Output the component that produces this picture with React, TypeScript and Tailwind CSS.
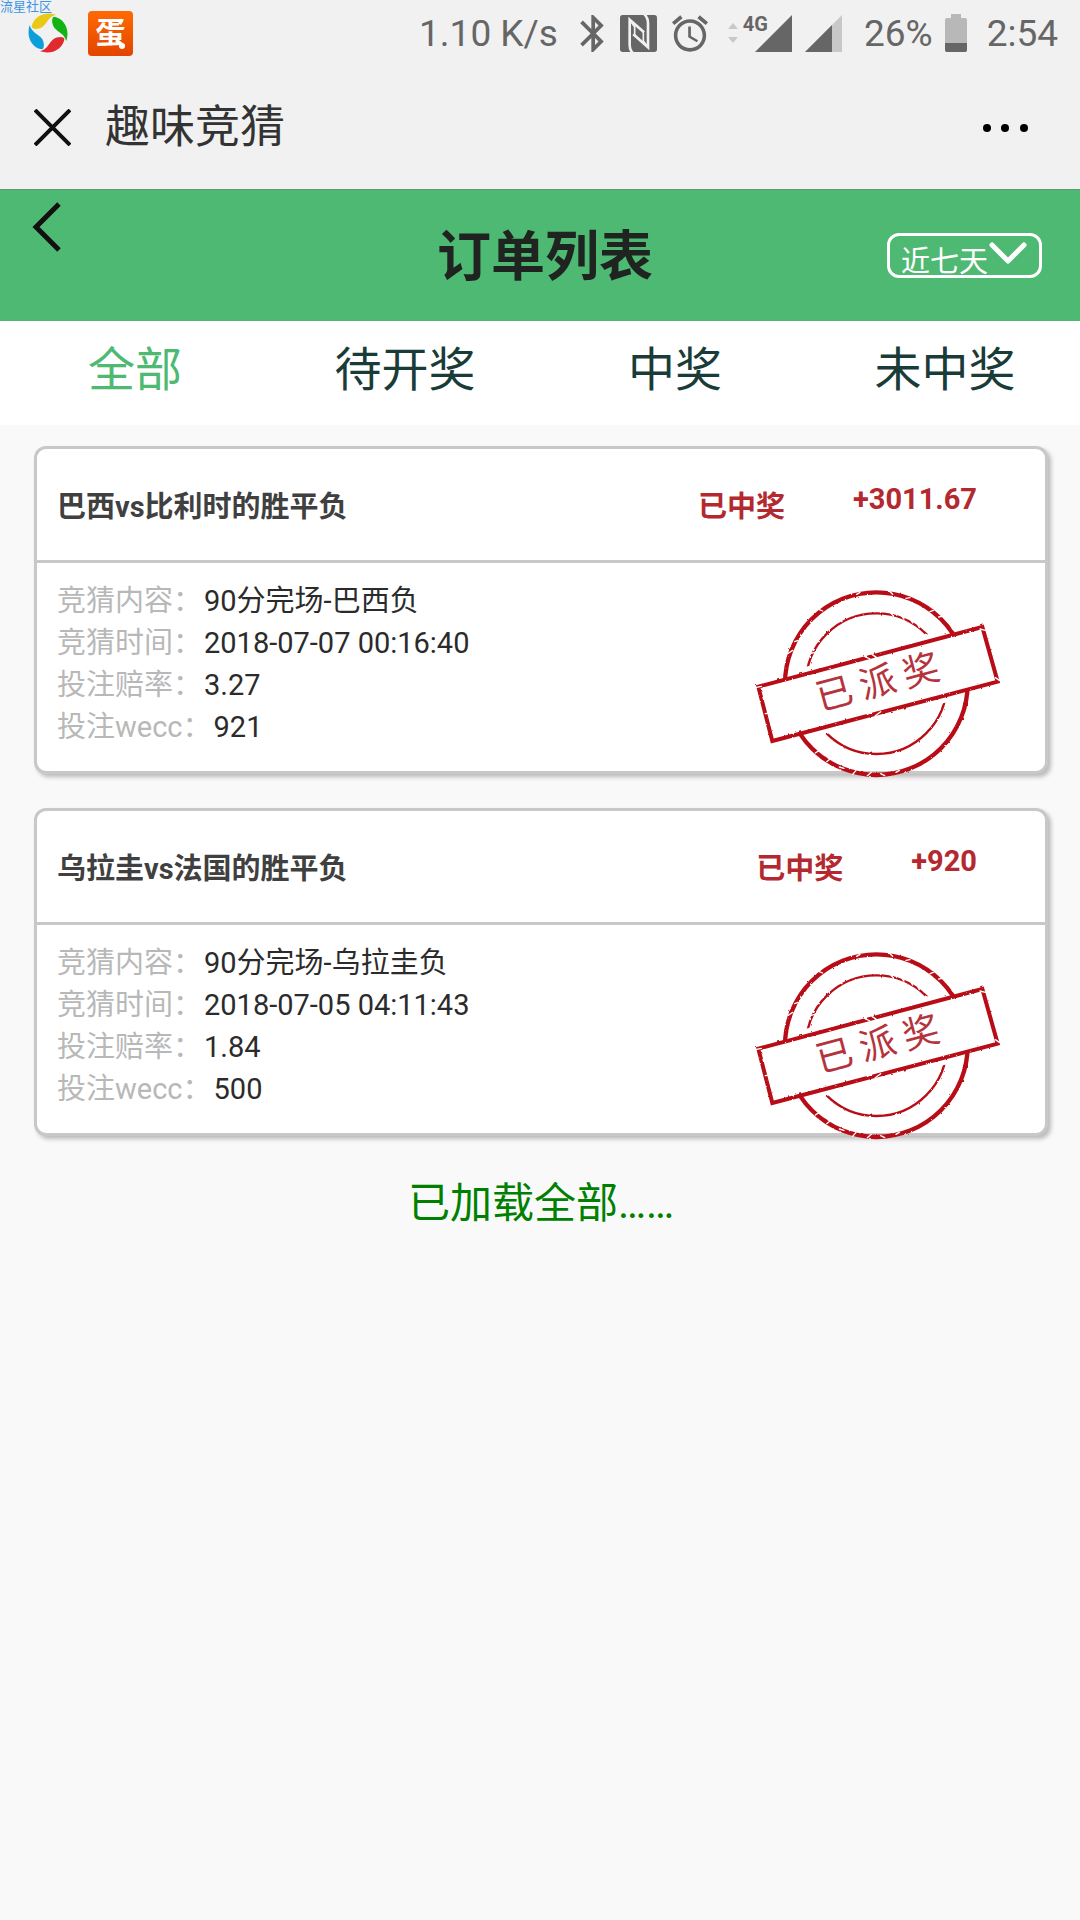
import React, { useState } from 'react';

interface Order {
  id: number;
  title: string;
  status: string;
  amount: string;
  details: { label: string; value: string }[];
}

const TABS = ['全部', '待开奖', '中奖', '未中奖'];

const ORDERS: Order[] = [
  {
    id: 1,
    title: '巴西vs比利时的胜平负',
    status: '已中奖',
    amount: '+3011.67',
    details: [
      { label: '竞猜内容：', value: '90分完场-巴西负' },
      { label: '竞猜时间：', value: '2018-07-07 00:16:40' },
      { label: '投注赔率：', value: '3.27' },
      { label: '投注wecc：', value: '921' },
    ],
  },
  {
    id: 2,
    title: '乌拉圭vs法国的胜平负',
    status: '已中奖',
    amount: '+920',
    details: [
      { label: '竞猜内容：', value: '90分完场-乌拉圭负' },
      { label: '竞猜时间：', value: '2018-07-05 04:11:43' },
      { label: '投注赔率：', value: '1.84' },
      { label: '投注wecc：', value: '500' },
    ],
  },
];

const PETAL = 'M84 5C50 -6 18 10 11 40C10 50 32 50 44 41C58 30 60 12 84 5Z';

const StatusBar: React.FC = () => (
  <div className="relative flex items-center justify-between h-[66px] pl-7 pr-[22px] text-[#666666]">
    <span className="absolute left-0 top-0 text-[13px] leading-[14px] text-[#3d94e8]">流星社区</span>

    <div className="flex items-center gap-5">
      <svg className="w-10 h-10" viewBox="0 0 120 120">
        <path d={PETAL} fill="#e9c914" />
        <path d={PETAL} fill="#12b312" transform="rotate(90 60 60)" />
        <path d={PETAL} fill="#e02a2e" transform="rotate(180 60 60)" />
        <path d={PETAL} fill="#0c9fdc" transform="rotate(270 60 60)" />
      </svg>
      <div className="relative w-[45px] h-[45px] rounded bg-linear-to-b from-[#ff6a04] to-[#e24500] flex items-center justify-center">
        <span className="text-[30px] leading-none font-bold text-white">蛋</span>
        <span className="absolute right-2 bottom-[7px] w-[6px] h-[6px] rounded-full bg-white" />
      </div>
    </div>

    <div className="flex items-center text-[37px] leading-none">
      <span>1.10 K/s</span>
      <svg className="ml-[22px] w-[24px] h-[37px]" viewBox="5 2 12.71 20" fill="currentColor">
        <path d="M17.71 7.71L12 2h-1v7.59L6.41 5 5 6.41 10.59 12 5 17.59 6.41 19 11 14.41V22h1l5.71-5.71-4.3-4.29 4.3-4.29zM13 5.83l1.88 1.88L13 9.59V5.83zm1.88 10.46L13 18.17v-3.76l1.88 1.88z" />
      </svg>
      <svg className="ml-4 w-[37px] h-[37px]" viewBox="0 0 111 111">
        <rect width="111" height="111" rx="8" fill="currentColor" />
        <g fill="none" stroke="#f1f1f1" strokeWidth="8">
          <path d="M38 113C28 104 29 96 29 86V14L72 52" />
          <path d="M73 -2C83 7 84 15 84 25V97L40 58" />
          <path d="M29 14L44 36V64" strokeWidth="5" />
          <path d="M84 97L70 78V48" strokeWidth="5" />
        </g>
      </svg>
      <svg className="ml-[15px] w-9 h-[37px]" viewBox="2 1.86 20 20.14" fill="currentColor">
        <path d="M22 5.72l-4.6-3.86-1.29 1.53 4.6 3.86L22 5.72zM7.88 3.39L6.6 1.86 2 5.71l1.29 1.53 4.59-3.85zM12.5 8H11v6l4.75 2.85.75-1.23-4-2.37V8zM12 4c-4.97 0-9 4.03-9 9s4.02 9 9 9c4.97 0 9-4.03 9-9s-4.03-9-9-9zm0 16c-3.87 0-7-3.13-7-7s3.13-7 7-7 7 3.13 7 7-3.13 7-7 7z" />
      </svg>
      <svg className="ml-5 w-[10px] h-5" viewBox="0 0 10 20" fill="#c8c8c8">
        <path d="M5 0L10 6H0ZM5 20L10 14H0Z" />
      </svg>
      <div className="relative ml-4 w-[38px] h-[37px]">
        <svg className="w-full h-full" viewBox="0 0 38 37" fill="currentColor">
          <path d="M38 0V37H1Z" />
        </svg>
        <span className="absolute right-6 top-0 text-[20px] leading-[18px] font-bold">4G</span>
      </div>
      <svg className="ml-3 w-[38px] h-[37px]" viewBox="0 0 38 37">
        <path d="M38 0V37H1Z" fill="#c8c8c8" />
        <path d="M28 10V37H1Z" fill="currentColor" />
      </svg>
      <span className="ml-[22px]">26%</span>
      <svg className="ml-3 w-[22px] h-[38px]" viewBox="0 0 22 38">
        <path d="M6 0H16V4H20Q22 4 22 6V36Q22 38 20 38H2Q0 38 0 36V6Q0 4 2 4H6Z" fill="#b8b8b8" />
        <path d="M0 29H22V36Q22 38 20 38H2Q0 38 0 36Z" fill="currentColor" />
      </svg>
      <span className="ml-5">2:54</span>
    </div>
  </div>
);

const Stamp: React.FC = () => (
  <svg className="absolute right-[43px] -bottom-[7px] w-[248px] h-[190px]" viewBox="44 53 744 570">
    <defs>
      <filter id="rough" x="-5%" y="-5%" width="110%" height="110%">
        <feTurbulence type="fractalNoise" baseFrequency="0.09" numOctaves="2" seed="4" />
        <feDisplacementMap in="SourceGraphic" scale="7" />
      </filter>
    </defs>
    <g fill="none" stroke="#b80f18" filter="url(#rough)">
      <circle cx="411" cy="340" r="211" strokeWidth="7" />
      <path d="M57 349L729 170L775 334L99 512Z" fill="#fff" stroke="#fff" strokeWidth="42" />
      <circle cx="411" cy="340" r="274" strokeWidth="13" />
      <path d="M57 349L729 170L775 334L99 512Z" fill="#fff" strokeWidth="12" />
    </g>
    {/* worn ink */}
    <g fill="none" stroke="#fff" strokeWidth="4" strokeLinecap="round">
      <path d="M376 258L392 266M398 252L412 262M384 432L398 424M408 436L424 424M48 352L66 348M148 248L160 240M166 214L176 210" />
      <path d="M228 548L240 540M262 574L272 566M300 590L314 594M340 612L350 600M384 616L396 606M424 610L436 616M470 606L480 600" />
      <path d="M450 62L460 72M500 84L512 82M572 124L582 120M598 140L608 138M352 72L362 66M240 118L250 122" />
      <path d="M452 126L462 136M486 136L494 146M512 146L520 158M534 160L540 172M212 250L226 246M226 212L240 214M300 146L308 154" />
      <path d="M768 322L780 330M722 176L738 180M78 430L90 428M300 536L312 540M570 486L582 492" />
    </g>
    <text
      transform="translate(415 336) rotate(-15)"
      x="-134 0 134"
      y="38"
      textAnchor="middle"
      fontSize="110"
      fill="#b5333c"
    >
      已派奖
    </text>
  </svg>
);

const OrderCard: React.FC<{ order: Order }> = ({ order }) => (
  <article className="relative bg-white border-3 border-[#c8c8c8] rounded-xl shadow-[3px_3px_4px_rgba(0,0,0,0.25)]">
    <header className="flex items-start h-[114px] px-5 pt-[38px] border-b-3 border-[#c8c8c8] text-[29px] font-bold">
      <h2 className="flex-1 leading-10 text-[#404040]">{order.title}</h2>
      <span className="leading-10 text-[#b3292f]">{order.status}</span>
      <span className="ml-[68px] mr-12 leading-6 text-[#b3292f]">{order.amount}</span>
    </header>
    <dl className="h-[208px] px-5 pt-[17px] text-[29px] leading-[42px]">
      {order.details.map((row) => (
        <div key={row.label} className="flex gap-0.5">
          <dt className="text-[#b8b8b8]">{row.label}</dt>
          <dd className="text-[#2b2b2b]">{row.value}</dd>
        </div>
      ))}
    </dl>
    <Stamp />
  </article>
);

export default function App() {
  const [activeTab, setActiveTab] = useState(TABS[0]);

  return (
    <div className="min-h-screen bg-[#f9f9f9] font-[Roboto,'Noto_Sans_CJK_SC',sans-serif]">
      <div className="bg-[#f1f1f1] border-b border-[#5f9c74]">
        <StatusBar />
        <div className="flex items-center h-[123px] pl-[34px] pr-[52px]">
          <button type="button" aria-label="关闭" className="text-[#111]">
            <svg className="w-[37px] h-[37px]" viewBox="0 0 37 37" stroke="currentColor" strokeWidth="4">
              <path d="M1 1L36 36M36 1L1 36" />
            </svg>
          </button>
          <span className="flex-1 ml-[34px] text-[45px] leading-none text-[#333]">趣味竞猜</span>
          <button type="button" aria-label="更多" className="text-black">
            <svg className="w-[45px] h-2" viewBox="0 0 45 8" fill="currentColor">
              <circle cx="4" cy="4" r="4" />
              <circle cx="22" cy="4" r="4" />
              <circle cx="41" cy="4" r="4" />
            </svg>
          </button>
        </div>
      </div>

      <header className="flex items-center h-[131px] bg-[#4eb972]">
        <div className="flex-1 self-start pl-8 pr-4 pt-3">
          <button type="button" aria-label="返回" className="block text-[#111]">
            <svg className="w-[30px] h-[50px]" viewBox="0 0 30 50" fill="none" stroke="currentColor" strokeWidth="5">
              <path d="M27 2L4 25L27 48" />
            </svg>
          </button>
        </div>
        <h1 className="pt-1 text-[54px] leading-none font-bold text-[#1f2421]">订单列表</h1>
        <div className="flex-1 flex justify-end pr-[38px]">
          <div className="relative flex items-start w-[155px] h-[45px] border-3 border-white rounded-xl">
            <select
              aria-label="时间范围"
              className="w-full h-[54px] pl-[11px] appearance-none bg-transparent text-[29px] text-white outline-none"
            >
              <option>近七天</option>
            </select>
            <svg
              className="absolute right-3 top-[6px] w-[38px] h-[23px] pointer-events-none"
              viewBox="0 0 38 23"
              fill="none"
              stroke="white"
              strokeWidth="5"
              strokeLinecap="round"
              strokeLinejoin="round"
            >
              <path d="M3 3L19 19L35 3" />
            </svg>
          </div>
        </div>
      </header>

      <nav className="grid grid-cols-4 h-[104px] pb-2 bg-white">
        {TABS.map((tab) => (
          <button
            key={tab}
            type="button"
            onClick={() => setActiveTab(tab)}
            className={`text-[47px] leading-none ${activeTab === tab ? 'text-[#4eb972]' : 'text-[#1a3c38]'}`}
          >
            {tab}
          </button>
        ))}
      </nav>

      <main className="flex flex-col gap-[34px] pl-[34px] pr-8 pt-[21px]">
        {ORDERS.map((order) => (
          <OrderCard key={order.id} order={order} />
        ))}
        <p className="text-center text-[42px] leading-[68px] text-[#008000]">已加载全部……</p>
      </main>
    </div>
  );
}
